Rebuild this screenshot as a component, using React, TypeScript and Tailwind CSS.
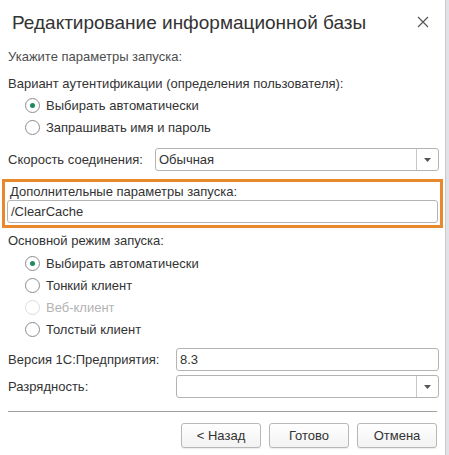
import React from 'react';

const Radio: React.FC<{ checked?: boolean; disabled?: boolean; label: string }> = ({ checked, disabled, label }) => (
  <div className="flex items-center h-[22px] pl-[25px]">
    <span
      className={`w-[15px] h-[15px] rounded-full border flex items-center justify-center bg-white ${
        disabled ? 'border-[#dcdcdc]' : 'border-[#8c8c8c]'
      }`}
    >
      {checked && <span className="w-[5px] h-[5px] rounded-full bg-[#1e8a5a]" />}
    </span>
    <span className={`ml-[6px] ${disabled ? 'text-[#b3b3b3]' : 'text-[#333]'}`}>{label}</span>
  </div>
);

const Field: React.FC<{ value?: string; dropdown?: boolean; className?: string }> = ({ value, dropdown, className }) => (
  <div className={`h-[23px] flex border border-[#b4b4b4] rounded-[3px] bg-white ${className || ''}`}>
    <div className="flex-1 px-[3px] flex items-center text-[#333]">{value}</div>
    {dropdown && (
      <div className="w-[22px] border-l border-[#c8c8c8] flex items-center justify-center">
        <svg width="7" height="4" viewBox="0 0 7 4">
          <path d="M0 0h7L3.5 4z" fill="#555" />
        </svg>
      </div>
    )}
  </div>
);

const Btn: React.FC<{ label: string }> = ({ label }) => (
  <button className="w-[80px] h-[25px] border border-[#b8b8b8] rounded-[3px] bg-gradient-to-b from-white to-[#f2f2f2] text-[#333] shadow-[0_1px_1px_rgba(0,0,0,0.08)]">
    {label}
  </button>
);

export default function App() {
  return (
    <div className="w-[449px] h-[455px] bg-[#dfe3e8] flex font-['Liberation_Sans',Arial,sans-serif] text-[13px] leading-none">
      <div className="w-[446px] h-full bg-white border-r border-[#c9c9c9] flex flex-col">
        <div className="flex items-center justify-between h-[42px] pl-[12px] pr-[15px] pt-[2px]">
          <h1 className="text-[19px] text-[#333] font-normal">Редактирование информационной базы</h1>
          <svg width="12" height="12" viewBox="0 0 12 12" className="mr-[1px]">
            <path d="M1 1l10 10M11 1L1 11" stroke="#555" strokeWidth="1.2" />
          </svg>
        </div>

        <div className="px-[8px] pt-[8px] text-[#4d4d4d]">Укажите параметры запуска:</div>
        <div className="px-[8px] pt-[14px] text-[#333]">Вариант аутентификации (определения пользователя):</div>
        <div className="pt-[4px]">
          <Radio checked label="Выбирать автоматически" />
          <Radio label="Запрашивать имя и пароль" />
        </div>

        <div className="flex items-center pl-[8px] pr-[6px] pt-[10px]">
          <span className="w-[147px] text-[#333]">Скорость соединения:</span>
          <Field value="Обычная" dropdown className="flex-1" />
        </div>

        <div className="mx-[2px] mt-[8px] border-[3px] border-[#e8892b] px-[2px] pt-[3px] pb-[2px]">
          <div className="text-[#333] pl-[3px] h-[14px]">Дополнительные параметры запуска:</div>
          <Field value="/ClearCache" className="mt-[1px]" />
        </div>

        <div className="px-[8px] pt-[6px] text-[#333]">Основной режим запуска:</div>
        <div className="pt-[5px]">
          <Radio checked label="Выбирать автоматически" />
          <Radio label="Тонкий клиент" />
          <Radio disabled label="Веб-клиент" />
          <Radio label="Толстый клиент" />
        </div>

        <div className="flex items-center pl-[8px] pr-[6px] pt-[8px]">
          <span className="w-[168px] text-[#333]">Версия 1С:Предприятия:</span>
          <Field value="8.3" className="flex-1" />
        </div>
        <div className="flex items-center pl-[8px] pr-[6px] pt-[4px]">
          <span className="w-[168px] text-[#333]">Разрядность:</span>
          <Field dropdown className="flex-1" />
        </div>

        <div className="mx-[8px] mt-[13px] border-t border-[#a0a0a0]" />

        <div className="flex justify-end gap-[8px] pr-[8px] pt-[11px]">
          <Btn label="< Назад" />
          <Btn label="Готово" />
          <Btn label="Отмена" />
        </div>
      </div>
    </div>
  );
}
